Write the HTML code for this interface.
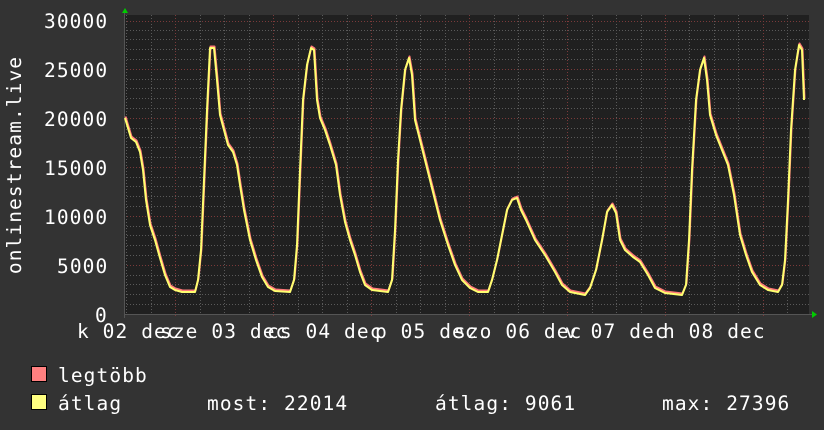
<!DOCTYPE html>
<html><head><meta charset="utf-8"><style>
body{margin:0;background:#333;width:824px;height:430px;overflow:hidden;font-family:"DejaVu Sans Mono","Liberation Mono",monospace;color:#fff}
svg{position:absolute;left:0;top:0}
text{font-family:"DejaVu Sans Mono","Liberation Mono",monospace;fill:#fff;font-size:19.5px;letter-spacing:1.1px}
</style></head><body>
<svg width="824" height="430" xmlns="http://www.w3.org/2000/svg">
<rect x="0" y="0" width="824" height="430" fill="#333"/>
<rect x="124" y="15" width="685" height="300" fill="#202020"/>
<g stroke="#5a5a5a" stroke-width="1" stroke-dasharray="1,2">
<line x1="124" x2="809" y1="304.5" y2="304.5"/><line x1="124" x2="809" y1="294.5" y2="294.5"/><line x1="124" x2="809" y1="284.5" y2="284.5"/><line x1="124" x2="809" y1="275.5" y2="275.5"/>
<line x1="124" x2="809" y1="255.5" y2="255.5"/><line x1="124" x2="809" y1="245.5" y2="245.5"/><line x1="124" x2="809" y1="235.5" y2="235.5"/><line x1="124" x2="809" y1="226.5" y2="226.5"/>
<line x1="124" x2="809" y1="206.5" y2="206.5"/><line x1="124" x2="809" y1="196.5" y2="196.5"/><line x1="124" x2="809" y1="186.5" y2="186.5"/><line x1="124" x2="809" y1="177.5" y2="177.5"/>
<line x1="124" x2="809" y1="157.5" y2="157.5"/><line x1="124" x2="809" y1="147.5" y2="147.5"/><line x1="124" x2="809" y1="137.5" y2="137.5"/><line x1="124" x2="809" y1="128.5" y2="128.5"/>
<line x1="124" x2="809" y1="108.5" y2="108.5"/><line x1="124" x2="809" y1="98.5" y2="98.5"/><line x1="124" x2="809" y1="88.5" y2="88.5"/><line x1="124" x2="809" y1="79.5" y2="79.5"/>
<line x1="124" x2="809" y1="59.5" y2="59.5"/><line x1="124" x2="809" y1="49.5" y2="49.5"/><line x1="124" x2="809" y1="39.5" y2="39.5"/><line x1="124" x2="809" y1="30.5" y2="30.5"/>
<line x1="126.5" x2="126.5" y1="15" y2="315"/><line x1="151.5" x2="151.5" y1="15" y2="315"/><line x1="200.5" x2="200.5" y1="15" y2="315"/><line x1="224.5" x2="224.5" y1="15" y2="315"/><line x1="249.5" x2="249.5" y1="15" y2="315"/>
<line x1="298.5" x2="298.5" y1="15" y2="315"/><line x1="322.5" x2="322.5" y1="15" y2="315"/><line x1="347.5" x2="347.5" y1="15" y2="315"/>
<line x1="396.5" x2="396.5" y1="15" y2="315"/><line x1="420.5" x2="420.5" y1="15" y2="315"/><line x1="445.5" x2="445.5" y1="15" y2="315"/>
<line x1="494.5" x2="494.5" y1="15" y2="315"/><line x1="518.5" x2="518.5" y1="15" y2="315"/><line x1="543.5" x2="543.5" y1="15" y2="315"/>
<line x1="592.5" x2="592.5" y1="15" y2="315"/><line x1="616.5" x2="616.5" y1="15" y2="315"/><line x1="641.5" x2="641.5" y1="15" y2="315"/>
<line x1="689.5" x2="689.5" y1="15" y2="315"/><line x1="714.5" x2="714.5" y1="15" y2="315"/><line x1="738.5" x2="738.5" y1="15" y2="315"/><line x1="787.5" x2="787.5" y1="15" y2="315"/>
</g>
<g stroke="#7a3a3a" stroke-width="1" stroke-dasharray="1,2">
<line x1="124" x2="809" y1="21.5" y2="21.5"/><line x1="124" x2="809" y1="69.5" y2="69.5"/><line x1="124" x2="809" y1="118.5" y2="118.5"/><line x1="124" x2="809" y1="167.5" y2="167.5"/><line x1="124" x2="809" y1="216.5" y2="216.5"/><line x1="124" x2="809" y1="265.5" y2="265.5"/>
<line x1="175.5" x2="175.5" y1="15" y2="318"/><line x1="273.5" x2="273.5" y1="15" y2="318"/><line x1="371.5" x2="371.5" y1="15" y2="318"/><line x1="469.5" x2="469.5" y1="15" y2="318"/><line x1="567.5" x2="567.5" y1="15" y2="318"/><line x1="665.5" x2="665.5" y1="15" y2="318"/><line x1="763.5" x2="763.5" y1="15" y2="318"/>
</g>
<line x1="124" x2="814" y1="314.5" y2="314.5" stroke="#555"/>
<line x1="124.5" x2="124.5" y1="10" y2="318" stroke="#555"/>
<polygon points="122,13 128,13 125,8" fill="#0c0"/>
<polygon points="812,311 812,318 817,314.5" fill="#0c0"/>
<g fill="none" stroke-linejoin="round">
<polyline stroke="#ff7a7a" stroke-width="2" transform="translate(0.5,-1.5)" points="125,118 128,128 131,138 136,142 140,152 143,170 146,200 150,225 155,240 160,258 165,275 170,287 175,290 182,292 195,292 198,280 201,250 204,180 207,110 210,48 214,48 217,80 220,115 224,130 228,145 233,152 237,165 240,185 244,210 250,240 256,260 262,277 268,287 275,291 290,292 294,280 297,245 300,170 303,100 307,65 311,48 314,50 317,100 320,118 325,130 330,145 336,165 340,195 345,222 350,240 355,255 360,272 365,285 372,290 388,292 392,280 395,230 398,160 401,110 405,70 409,58 412,75 415,120 420,140 425,160 430,180 435,200 440,220 448,245 455,265 462,280 470,288 478,292 488,292 492,280 497,260 502,235 507,210 512,200 517,198 521,210 526,220 535,240 545,255 555,272 562,285 570,292 585,295 590,288 596,270 602,240 607,212 612,205 616,213 620,240 625,250 633,257 640,262 648,275 655,288 665,293 682,295 686,285 689,240 692,170 696,100 700,70 704,58 707,80 710,115 716,135 722,150 728,165 734,195 740,235 746,255 752,272 760,285 768,290 778,292 782,285 785,260 788,200 791,130 795,70 799,45 802,50 804,100"/>
<polyline stroke="#ffff70" stroke-width="2" points="125,118 128,128 131,138 136,142 140,152 143,170 146,200 150,225 155,240 160,258 165,275 170,287 175,290 182,292 195,292 198,280 201,250 204,180 207,110 210,48 214,48 217,80 220,115 224,130 228,145 233,152 237,165 240,185 244,210 250,240 256,260 262,277 268,287 275,291 290,292 294,280 297,245 300,170 303,100 307,65 311,48 314,50 317,100 320,118 325,130 330,145 336,165 340,195 345,222 350,240 355,255 360,272 365,285 372,290 388,292 392,280 395,230 398,160 401,110 405,70 409,58 412,75 415,120 420,140 425,160 430,180 435,200 440,220 448,245 455,265 462,280 470,288 478,292 488,292 492,280 497,260 502,235 507,210 512,200 517,198 521,210 526,220 535,240 545,255 555,272 562,285 570,292 585,295 590,288 596,270 602,240 607,212 612,205 616,213 620,240 625,250 633,257 640,262 648,275 655,288 665,293 682,295 686,285 689,240 692,170 696,100 700,70 704,58 707,80 710,115 716,135 722,150 728,165 734,195 740,235 746,255 752,272 760,285 768,290 778,292 782,285 785,260 788,200 791,130 795,70 799,45 802,50 804,100"/>
</g>
<g>
<text x="44" y="28">30000</text><text x="44" y="77">25000</text><text x="44" y="126">20000</text><text x="44" y="175">15000</text><text x="44" y="224">10000</text><text x="57" y="273">5000</text><text x="95" y="322">0</text>
</g>
<text transform="translate(21,165) rotate(-90)" text-anchor="middle">onlinestream.live</text>
<g>
<text x="77" y="338">k 02 dec</text><text x="160" y="338">sze 03 dec</text><text x="267" y="338">cs 04 dec</text><text x="375" y="338">p 05 dec</text><text x="454" y="338">szo 06 dec</text><text x="565" y="338">v 07 dec</text><text x="663" y="338">h 08 dec</text>
</g>
<rect x="31.5" y="366.5" width="15" height="15" fill="#ff8080" stroke="#000"/>
<rect x="31.5" y="394.5" width="15" height="15" fill="#ffff80" stroke="#000"/>
<text x="58" y="382">legtöbb</text>
<text x="58" y="410">átlag</text>
<text x="207" y="410">most: 22014</text>
<text x="435" y="410">átlag: 9061</text>
<text x="662" y="410">max: 27396</text>
</svg>
</body></html>
